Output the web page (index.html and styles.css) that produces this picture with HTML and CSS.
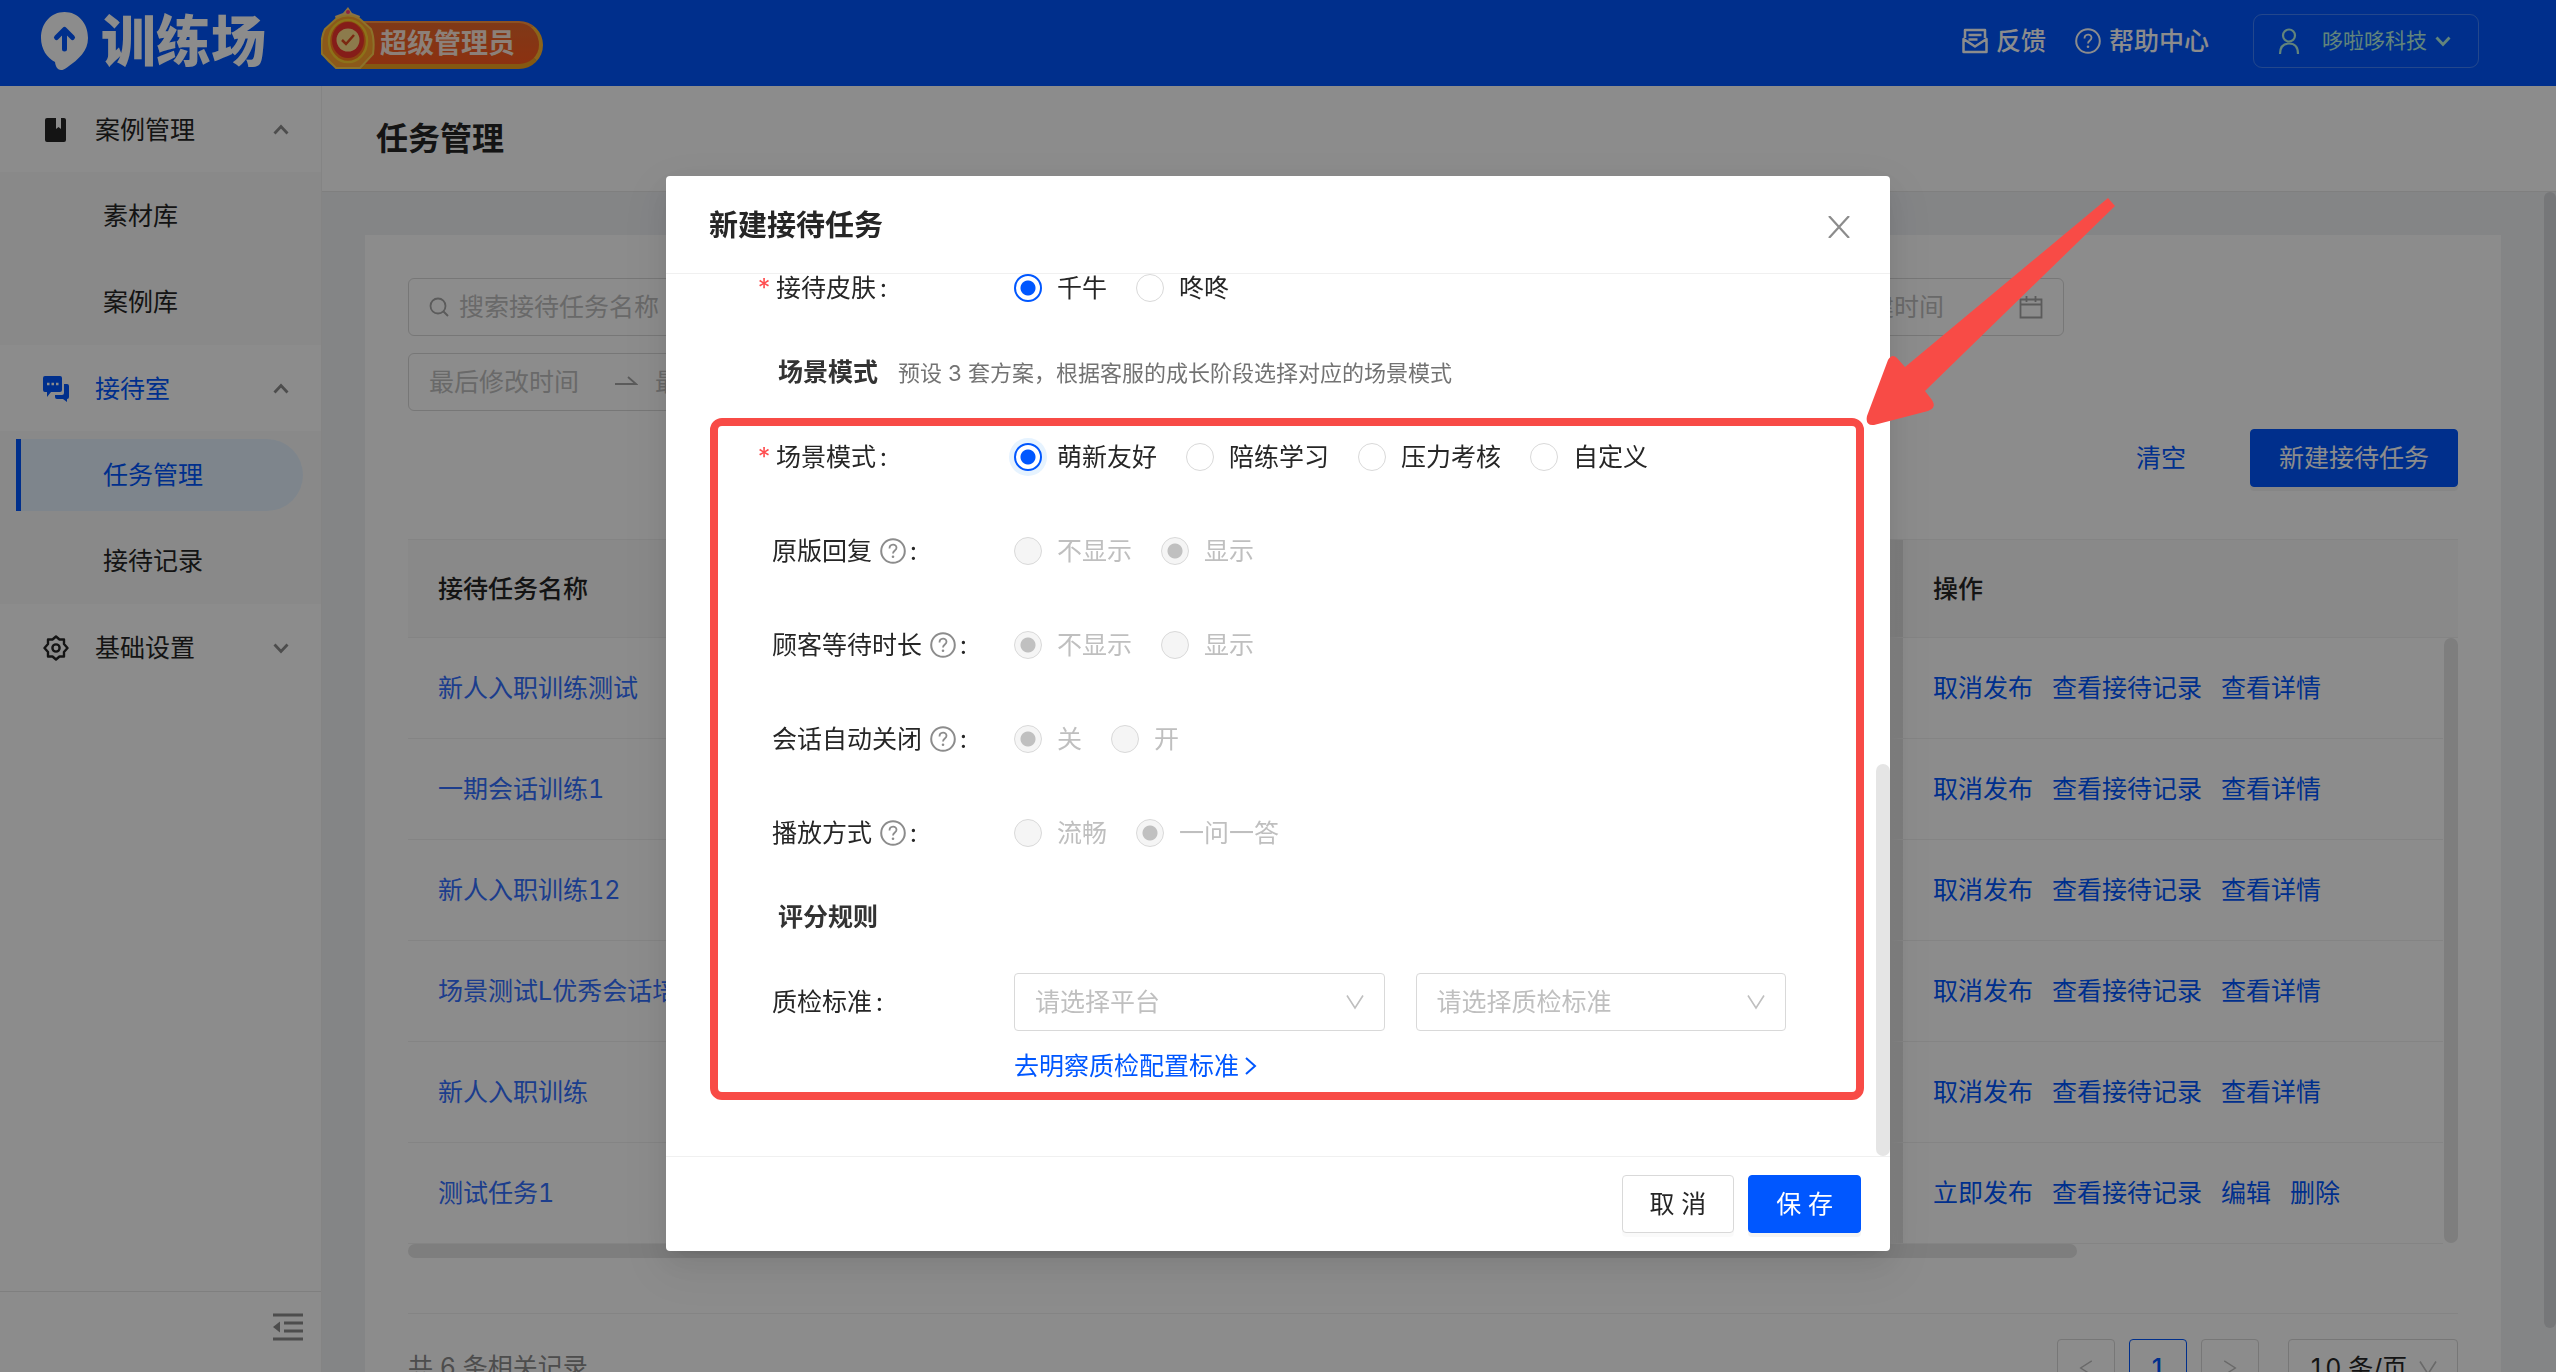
FILE: index.html
```html
<!DOCTYPE html>
<html lang="zh-CN">
<head>
<meta charset="utf-8">
<meta name="viewport" content="width=device-width, initial-scale=1">
<title>训练场 - 任务管理</title>
<link rel="stylesheet" href="styles.css">
</head>
<body>
<svg class="sprite" aria-hidden="true">
  <symbol id="i-down" viewBox="0 0 16 16"><path d="M1.500 4.500 8 11.500l6.500-7" fill="none" stroke="currentColor" stroke-width="2.800"/></symbol>
  <symbol id="i-thin" viewBox="0 0 18 16"><path d="M1 1.500 9 14l8-12.500" fill="none" stroke="currentColor" stroke-width="1.600"/></symbol>
  <symbol id="i-help" viewBox="0 0 26 26"><circle cx="13" cy="13" r="11.800" fill="none" stroke="currentColor" stroke-width="2"/><path d="M9.500 10.500c0-5 7-5 7-.7 0 2.700-3.500 2.700-3.500 5.700" fill="none" stroke="currentColor" stroke-width="1.800"/><circle cx="13" cy="18.800" r="1.300" fill="currentColor"/></symbol>
  <symbol id="i-cal" viewBox="0 0 24 24"><path d="M1.500 4.500h21v18h-21zM1.500 9.500h21M7.500 1v6M16.500 1v6" fill="none" stroke="currentColor" stroke-width="1.800"/></symbol>
  <symbol id="i-arrow" viewBox="0 0 24 16"><path d="M1 10h21l-8-7" fill="none" stroke="currentColor" stroke-width="1.800"/></symbol>
</svg>

<header class="topbar">
  <div class="brand">
    <svg class="brand-pin" viewBox="0 0 47 58"><path d="M23.500 0C10 0 0 11 0 26c0 11 6 20 14 24 .5 5 3 8 6 8 2 0 3-.5 6-2.500C38 47 47 39 47 26 47 11 37 0 23.500 0z" fill="#fff"/><path d="M23.500 37V19M15.500 25.500l8-8 8 8" fill="none" stroke="#0057ff" stroke-width="5" stroke-linecap="round" stroke-linejoin="round"/></svg>
    <span class="brand-name">训练场</span>
  </div>
  <div class="badge">
    <svg class="badge-medal" viewBox="0 0 54 62"><path d="M27 0l4 6 8 3-2 8H16l-2-8 8-3z" fill="#ffcf7a"/><circle cx="27" cy="5" r="2" fill="#ff3d7a"/><path d="M15 12Q27 5 39 12l11 10q4 10 2 25L39 61H15L1 47q-2-15 3-25z" fill="#ffa22e" stroke="#ffcf4d" stroke-width="2"/><ellipse cx="27" cy="34" rx="19" ry="21" fill="#ff7a1f" stroke="#ffcf2e" stroke-width="2.500"/><ellipse cx="27" cy="33" rx="16" ry="18" fill="#f2352e"/><circle cx="27" cy="33" r="11.500" fill="#ffe08a"/><path d="M21 33l4 4 8-9" fill="none" stroke="#e04a20" stroke-width="2.500"/></svg>
    <span class="badge-text">超级管理员</span>
  </div>
  <nav class="top-links">
    <a href="#"><svg class="ic26" viewBox="0 0 26 26"><path d="M3 10V2h20v8M1.500 11v13h23V11L13 18.500zM6.500 7h13M6.500 11.500h9" fill="none" stroke="currentColor" stroke-width="2.500" stroke-linejoin="round"/></svg>反馈</a>
    <a href="#"><svg class="ic26"><use href="#i-help"/></svg>帮助中心</a>
  </nav>
  <button class="account" type="button">
    <svg class="ic26" viewBox="0 0 26 26"><circle cx="13" cy="7.500" r="6" fill="none" stroke="currentColor" stroke-width="2.200"/><path d="M4 26c0-7 3.500-10.500 9-10.500S22 19 22 26" fill="none" stroke="currentColor" stroke-width="2.200"/></svg>
    <span>哆啦哆科技</span>
    <svg class="ic16"><use href="#i-down"/></svg>
  </button>
</header>

<div class="shell">
  <aside class="sidebar">
    <nav class="menu">
      <button class="menu-head" type="button"><svg class="ic26" viewBox="0 0 26 26"><path d="M4 1h9v11l2.500-2 2.500 2V1h3q2 0 2 2v20q0 2-2 2H4q-2 0-2-2V3q0-2 2-2z" fill="currentColor"/></svg><span>案例管理</span><svg class="ic16 up"><use href="#i-down"/></svg></button>
      <div class="submenu">
        <a href="#">素材库</a>
        <a href="#">案例库</a>
      </div>
      <button class="menu-head current" type="button"><svg class="ic26" viewBox="0 0 26 26"><path d="M2 0h15q2 0 2 2v12q0 2-2 2H8l-4 5v-5H2q-2 0-2-2V2q0-2 2-2z" fill="currentColor"/><path d="M21 8h3q2 0 2 2v11q0 2-2 2v3l-4-3h-6q-2 0-2-2v-2h7q2 0 2-2z" fill="currentColor"/><path d="M4 8h2.500M8.500 8H11M13 8h2.500" stroke="#fff" stroke-width="2.500"/></svg><span>接待室</span><svg class="ic16 up"><use href="#i-down"/></svg></button>
      <div class="submenu">
        <a href="#" class="active" aria-current="page">任务管理</a>
        <a href="#">接待记录</a>
      </div>
      <button class="menu-head" type="button"><svg class="ic26" viewBox="0 0 26 26"><path d="M13 1.500l3.500 3H21v4.500l3.500 4L21 17v4.500h-4.500l-3.500 3-3.500-3H5V17l-3.500-4L5 9V4.500h4.500z" fill="none" stroke="currentColor" stroke-width="2.400" stroke-linejoin="round"/><circle cx="13" cy="13" r="3.600" fill="none" stroke="currentColor" stroke-width="2.400"/></svg><span>基础设置</span><svg class="ic16"><use href="#i-down"/></svg></button>
    </nav>
    <div class="sidebar-foot">
      <button type="button" aria-label="收起菜单"><svg width="30" height="28" viewBox="0 0 30 28"><path d="M0 2h30M11 10h19M11 18h19M0 26h30" stroke="currentColor" stroke-width="3"/><path d="M0 14l7-5.500v11z" fill="currentColor"/></svg></button>
    </div>
  </aside>

  <main class="main">
    <h1 class="page-title">任务管理</h1>
    <section class="card">
      <div class="filters">
        <label class="field"><svg class="ic20" viewBox="0 0 20 20"><circle cx="9" cy="9" r="7.500" fill="none" stroke="currentColor" stroke-width="1.800"/><path d="M14.500 14.500L19 19" stroke="currentColor" stroke-width="2"/></svg><input type="text" placeholder="搜索接待任务名称" aria-label="搜索接待任务名称"></label>
        <div class="field range created">
          <input type="text" placeholder="创建时间" aria-label="创建开始时间">
          <svg class="ic24"><use href="#i-arrow"/></svg>
          <input type="text" placeholder="创建时间" aria-label="创建结束时间">
          <svg class="ic24"><use href="#i-cal"/></svg>
        </div>
        <div class="field range">
          <input type="text" placeholder="最后修改时间" aria-label="最后修改开始时间">
          <svg class="ic24"><use href="#i-arrow"/></svg>
          <input type="text" placeholder="最后修改时间" aria-label="最后修改结束时间">
          <svg class="ic24"><use href="#i-cal"/></svg>
        </div>
      </div>
      <div class="actions">
        <button class="text-btn" type="button">清空</button>
        <button class="btn primary" type="button">新建接待任务</button>
      </div>

      <div class="table-box">
        <table>
          <colgroup><col><col class="col-ops"><col class="col-bar"></colgroup>
          <thead><tr><th>接待任务名称</th><th class="ops">操作</th><td></td></tr></thead>
          <tbody>
            <tr><td><a href="#">新人入职训练测试</a></td><td class="ops"><div><a href="#">取消发布</a><a href="#">查看接待记录</a><a href="#">查看详情</a></div></td></tr>
            <tr><td><a href="#">一期会话训练1</a></td><td class="ops"><div><a href="#">取消发布</a><a href="#">查看接待记录</a><a href="#">查看详情</a></div></td></tr>
            <tr><td><a href="#">新人入职训练12</a></td><td class="ops"><div><a href="#">取消发布</a><a href="#">查看接待记录</a><a href="#">查看详情</a></div></td></tr>
            <tr><td><a href="#">场景测试L优秀会话培训</a></td><td class="ops"><div><a href="#">取消发布</a><a href="#">查看接待记录</a><a href="#">查看详情</a></div></td></tr>
            <tr><td><a href="#">新人入职训练</a></td><td class="ops"><div><a href="#">取消发布</a><a href="#">查看接待记录</a><a href="#">查看详情</a></div></td></tr>
            <tr><td><a href="#">测试任务1</a></td><td class="ops"><div><a href="#">立即发布</a><a href="#">查看接待记录</a><a href="#">编辑</a><a href="#">删除</a></div></td></tr>
          </tbody>
        </table>
        <span class="bar-y"></span>
        <span class="bar-x"></span>
      </div>

      <footer class="pager">
        <span class="total">共 6 条相关记录</span>
        <button class="page" type="button" aria-label="上一页"><svg class="ic16 left"><use href="#i-thin"/></svg></button>
        <button class="page on" type="button">1</button>
        <button class="page" type="button" aria-label="下一页"><svg class="ic16 right"><use href="#i-thin"/></svg></button>
        <span class="pick page-size"><select aria-label="每页条数"><option>10 条/页</option></select><svg class="ic18"><use href="#i-thin"/></svg></span>
      </footer>
    </section>
    <span class="page-bar"></span>
  </main>
</div>

<div class="mask">
  <div class="modal" role="dialog" aria-modal="true" aria-labelledby="dlg-title">
    <header class="modal-head">
      <h2 id="dlg-title">新建接待任务</h2>
      <button type="button" aria-label="关闭"><svg width="22" height="22" viewBox="0 0 22 22"><path d="M1 0l20 22M21 0L1 22" stroke="currentColor" stroke-width="2.200"/></svg></button>
    </header>
    <form class="modal-body">
      <div class="form-scroll">
        <div class="row"><span class="label"><i>*</i>接待皮肤<b>:</b></span>
          <div class="opts"><label><input type="radio" name="skin" checked>千牛</label><label><input type="radio" name="skin">咚咚</label></div></div>
        <h3>场景模式<small>预设 3 套方案，根据客服的成长阶段选择对应的场景模式</small></h3>
        <div class="row"><span class="label"><i>*</i>场景模式<b>:</b></span>
          <div class="opts"><label><input type="radio" name="mode" class="ring" checked>萌新友好</label><label><input type="radio" name="mode">陪练学习</label><label><input type="radio" name="mode">压力考核</label><label><input type="radio" name="mode">自定义</label></div></div>
        <div class="row"><span class="label">原版回复<svg class="ic26"><use href="#i-help"/></svg><b>:</b></span>
          <div class="opts"><label><input type="radio" name="orig" disabled>不显示</label><label><input type="radio" name="orig" disabled checked>显示</label></div></div>
        <div class="row"><span class="label">顾客等待时长<svg class="ic26"><use href="#i-help"/></svg><b>:</b></span>
          <div class="opts"><label><input type="radio" name="wait" disabled checked>不显示</label><label><input type="radio" name="wait" disabled>显示</label></div></div>
        <div class="row"><span class="label">会话自动关闭<svg class="ic26"><use href="#i-help"/></svg><b>:</b></span>
          <div class="opts"><label><input type="radio" name="close" disabled checked>关</label><label><input type="radio" name="close" disabled>开</label></div></div>
        <div class="row"><span class="label">播放方式<svg class="ic26"><use href="#i-help"/></svg><b>:</b></span>
          <div class="opts"><label><input type="radio" name="play" disabled>流畅</label><label><input type="radio" name="play" disabled checked>一问一答</label></div></div>
        <h3>评分规则</h3>
        <div class="row"><label class="label" for="platform">质检标准<b>:</b></label>
          <div class="quality">
            <span class="pick"><select id="platform"><option>请选择平台</option></select><svg class="ic18"><use href="#i-thin"/></svg></span>
            <span class="pick"><select aria-label="质检标准"><option>请选择质检标准</option></select><svg class="ic18"><use href="#i-thin"/></svg></span>
            <a href="#">去明察质检配置标准<svg width="12" height="20" viewBox="0 0 12 20"><path d="M1 2l9 8-9 8" fill="none" stroke="currentColor" stroke-width="2"/></svg></a>
          </div></div>
      </div>
      <span class="modal-bar"></span>
    </form>
    <footer class="modal-foot">
      <button class="btn" type="button">取 消</button>
      <button class="btn primary" type="button">保 存</button>
    </footer>
    <div class="mark-box"></div>
    <svg class="mark-arrow" viewBox="0 0 260 240"><path d="M248 8L255 16 65 201l7 9q5 8-4 11L14 235q-9 1-7-9L28 170q4-7 9-2l8 9z" fill="#f84b46"/></svg>
  </div>
</div>
</body>
</html>
```
FILE: styles.css
```css
:root {
  --brand: #0057ff;
  --text: #262626;
  --muted: #bfbfbf;
  --line: #d9d9d9;
  --hair: #f0f0f0;
}
* { box-sizing: border-box; }
body {
  margin: 0;
  height: 100vh;
  overflow: hidden;
  display: flex;
  flex-direction: column;
  font: 25px/40px Inter, "Noto Sans CJK SC", sans-serif;
  font-variant-numeric: tabular-nums;
  color: var(--text);
  background: #f0f2f5;
}
a { color: var(--brand); text-decoration: none; }
button, input, select { font: inherit; color: inherit; margin: 0; }
button { background: none; border: 0; padding: 0; cursor: pointer; }
h1, h2, h3 { margin: 0; font-weight: 700; }
svg { flex: none; display: block; }
.sprite { position: absolute; width: 0; height: 0; }
.ic16 { width: 16px; height: 16px; }
.ic18 { width: 18px; height: 16px; }
.ic20 { width: 20px; height: 20px; }
.ic24 { width: 24px; height: 24px; }
.ic26 { width: 26px; height: 26px; }
.up { transform: rotate(180deg); }
.left { transform: rotate(90deg); }
.right { transform: rotate(-90deg); }

/* top bar */
.topbar {
  flex: none;
  height: 86px;
  display: flex;
  align-items: center;
  padding: 0 77px 4px 41px;
  background: var(--brand);
  color: #fff;
}
.brand { display: flex; align-items: center; gap: 13px; }
.brand-pin { width: 47px; height: 58px; }
.brand-name { font-size: 55px; line-height: 58px; font-weight: 900; }
.badge {
  position: relative;
  display: flex;
  align-items: center;
  height: 48px;
  margin: 8px 0 0 55px;
  padding: 0 24px 0 55px;
  border: 4px solid #ffb52e;
  border-top-color: #ff9440;
  border-bottom-color: #f0a020;
  border-width: 2px 4px 5px;
  border-radius: 24px;
  background: linear-gradient(#e8682c, #ff5a1f);
}
.badge-medal { position: absolute; left: -4px; bottom: -5px; width: 54px; height: 62px; }
.badge-text { font-size: 27px; font-weight: 700; color: #ffe9dc; }
.top-links { display: flex; gap: 29px; margin-left: auto; font-weight: 500; }
.top-links a { display: flex; align-items: center; gap: 8px; color: #fff; }
.account {
  display: flex;
  align-items: center;
  height: 54px;
  margin-left: 44px;
  padding: 0 27px 0 22px;
  border: 1px solid rgba(255, 255, 255, .25);
  border-radius: 9px;
  font-size: 21px;
  color: #b4f0e0;
}
.account span { margin: 0 8px 0 20px; }

/* side menu */
.shell { flex: 1; min-height: 0; display: flex; }
.sidebar {
  flex: none;
  width: 322px;
  display: flex;
  flex-direction: column;
  background: #fff;
  border-right: 1px solid var(--hair);
}
.menu { flex: 1; }
.menu-head {
  width: 100%;
  height: 86px;
  display: flex;
  align-items: center;
  padding: 2px 32px 0 43px;
  color: var(--text);
}
.menu-head span { flex: 1; margin-left: 26px; text-align: left; }
.menu-head .ic16 { color: #8c8c8c; }
.menu-head.current { color: var(--brand); }
.submenu { display: grid; gap: 14px; padding: 8px 0 7px; background: #fafafa; }
.submenu a {
  height: 72px;
  margin: 0 18px 0 16px;
  display: flex;
  align-items: center;
  padding-left: 82px;
  border-left: 5px solid transparent;
  border-radius: 0 36px 36px 0;
  color: var(--text);
}
.submenu a.active { background: #e6f3ff; border-left-color: var(--brand); color: var(--brand); }
.sidebar-foot {
  height: 81px;
  display: flex;
  justify-content: flex-end;
  align-items: flex-start;
  padding: 21px 18px 0;
  border-top: 1px solid #e8e8e8;
  color: #8c8c8c;
}

/* page */
.main { position: relative; flex: 1; min-width: 0; overflow: hidden; }
.page-title {
  height: 106px;
  padding: 0 54px;
  font-size: 32px;
  line-height: 106px;
  background: #fff;
  border-bottom: 1px solid #e8e8e8;
}
.card { margin: 43px 55px 0 43px; padding: 43px; background: #fff; }
.filters { display: grid; grid-template-columns: 1fr 1fr; gap: 17px 25px; margin-right: 394px; }
.field {
  height: 58px;
  display: flex;
  align-items: center;
  gap: 10px;
  padding: 0 20px;
  border: 1px solid var(--line);
  border-radius: 6px;
  color: #a6a6a6;
}
.field input { flex: 1; min-width: 0; border: 0; padding: 0; outline: 0; background: none; }
.field ::placeholder { color: var(--muted); opacity: 1; }
.range { gap: 17px; }
.range input { flex: none; width: 168px; }
.range .ic24:last-child { margin-left: auto; }
.created { justify-content: flex-end; }
.created input { width: 158px; }
.created .ic24:last-child { margin-left: 0; }
.actions { display: flex; justify-content: flex-end; align-items: center; gap: 64px; margin-top: 18px; }
.text-btn { color: var(--brand); }
.btn {
  height: 58px;
  padding: 0 28px;
  border: 1px solid var(--line);
  border-radius: 4px;
  background: #fff;
  box-shadow: 0 4px 0 rgba(0, 0, 0, .02);
}
.btn.primary { background: var(--brand); border-color: var(--brand); color: #fff; box-shadow: 0 4px 0 rgba(0, 0, 0, .045); }

.table-box { position: relative; margin-top: 52px; padding-bottom: 14px; }
table { width: 100%; table-layout: fixed; border-collapse: separate; border-spacing: 0; }
.col-ops { width: 540px; }
.col-bar { width: 15px; }
th, td { padding: 0 30px; text-align: left; font-weight: 400; white-space: nowrap; }
th { font-weight: 500; }
thead th, thead td { height: 99px; background: #fafafa; border-top: 1px solid var(--hair); border-bottom: 1px solid var(--hair); }
tbody td { height: 101px; border-bottom: 1px solid var(--hair); }
tbody td:first-child a { color: #3370ff; }
.ops { position: relative; }
.ops::before {
  content: "";
  position: absolute;
  top: 0;
  bottom: 0;
  left: -30px;
  width: 30px;
  background: linear-gradient(90deg, transparent, rgba(0, 0, 0, .1));
}
.ops div { display: flex; gap: 19px; }
.bar-y, .bar-x, .page-bar, .modal-bar { position: absolute; border-radius: 7px; background: #e5e5e5; }
.bar-y { right: 0; top: 99px; bottom: 15px; width: 14px; }
.bar-x { left: 0; bottom: 0; width: 81.4%; height: 14px; }
.page-bar { right: 0; top: 106px; bottom: 44px; width: 12px; background: #d8d9dc; }

.pager {
  display: flex;
  gap: 14px;
  margin-top: 55px;
  padding-top: 25px;
  border-top: 1px solid var(--hair);
  line-height: 56px;
}
.total { margin-right: auto; color: #8c8c8c; }
.page {
  width: 58px;
  height: 58px;
  display: grid;
  place-items: center;
  border: 1px solid var(--line);
  border-radius: 4px;
  color: var(--muted);
}
.page.on { border-color: var(--brand); color: var(--brand); font-weight: 500; }
.page-size { width: 170px; margin-left: 15px; }
.page-size select { color: var(--text); }

/* drop-downs */
.pick { position: relative; display: flex; height: 58px; color: var(--muted); }
.pick select {
  appearance: none;
  width: 100%;
  padding: 0 20px;
  border: 1px solid var(--line);
  border-radius: 4px;
  background: #fff;
  opacity: 1;
}
.pick svg { position: absolute; right: 21px; top: 21px; pointer-events: none; }

/* dialog */
.mask {
  position: fixed;
  inset: 0;
  display: flex;
  justify-content: center;
  align-items: flex-start;
  padding-top: 176px;
  background: rgba(0, 0, 0, .45);
}
.modal {
  position: relative;
  width: 1224px;
  max-width: 100%;
  background: #fff;
  border-radius: 4px;
  box-shadow: 0 5px 11px -7px rgba(0, 0, 0, .12), 0 11px 29px rgba(0, 0, 0, .08), 0 16px 50px 14px rgba(0, 0, 0, .05);
}
.modal-head {
  height: 98px;
  display: flex;
  justify-content: space-between;
  align-items: center;
  padding: 2px 40px 0 43px;
  border-bottom: 1px solid var(--hair);
}
.modal-head h2 { font-size: 29px; }
.modal-head button { color: #8c8c8c; padding-top: 2px; }
.modal-body { position: relative; height: 882px; overflow: hidden; }
.form-scroll { display: flex; flex-direction: column; gap: 36px; margin-top: -15px; padding: 0 104px 0 106px; }
.row { display: flex; min-height: 58px; }
.label { flex: none; width: 242px; height: 58px; display: flex; align-items: center; }
.label i { width: 20px; margin-left: -16px; font-style: normal; color: #ff4d4f; }
.label svg { margin-left: 8px; color: #8c8c8c; }
.label b { margin-left: 4px; font-weight: 400; }
.opts { display: flex; align-items: center; gap: 29px; }
.opts label { display: flex; align-items: center; gap: 15px; }
.opts label:has(:disabled) { color: var(--muted); }
input[type="radio"] {
  appearance: none;
  width: 28px;
  height: 28px;
  border: 1px solid var(--line);
  border-radius: 50%;
  background: #fff;
}
input[type="radio"]:checked { border: 2px solid var(--brand); background: radial-gradient(circle, var(--brand) 7px, #fff 8px); }
input[type="radio"]:disabled { border: 1px solid var(--line); background: #f5f5f5; }
input[type="radio"]:disabled:checked { background: radial-gradient(circle, #c0c0c0 7px, #f5f5f5 8px); }
input.ring { box-shadow: 0 0 0 5px #e6f3ff; }
h3 { height: 39px; padding-left: 6px; font-size: 25px; line-height: 39px; color: #333; }
h3 small { margin-left: 20px; font-size: 22px; font-weight: 400; color: #737373; }
.quality { flex: 1; display: grid; grid-template-columns: 1fr 1fr; gap: 15px 31px; }
.quality a { display: flex; align-items: center; gap: 6px; }
.modal-bar { right: 0; top: 490px; bottom: 0; width: 14px; }
.modal-foot {
  height: 95px;
  display: flex;
  justify-content: flex-end;
  align-items: center;
  gap: 14px;
  padding: 0 29px;
  border-top: 1px solid var(--hair);
}
.modal-foot .btn { padding: 0 27px; }

/* call-out drawn over the dialog */
.mark-box {
  position: absolute;
  inset: 242px 26px 151px 44px;
  border: 8px solid #f84b46;
  border-radius: 12px;
  pointer-events: none;
}
.mark-arrow { position: absolute; left: 1194px; top: 14px; width: 260px; height: 240px; pointer-events: none; }
```
